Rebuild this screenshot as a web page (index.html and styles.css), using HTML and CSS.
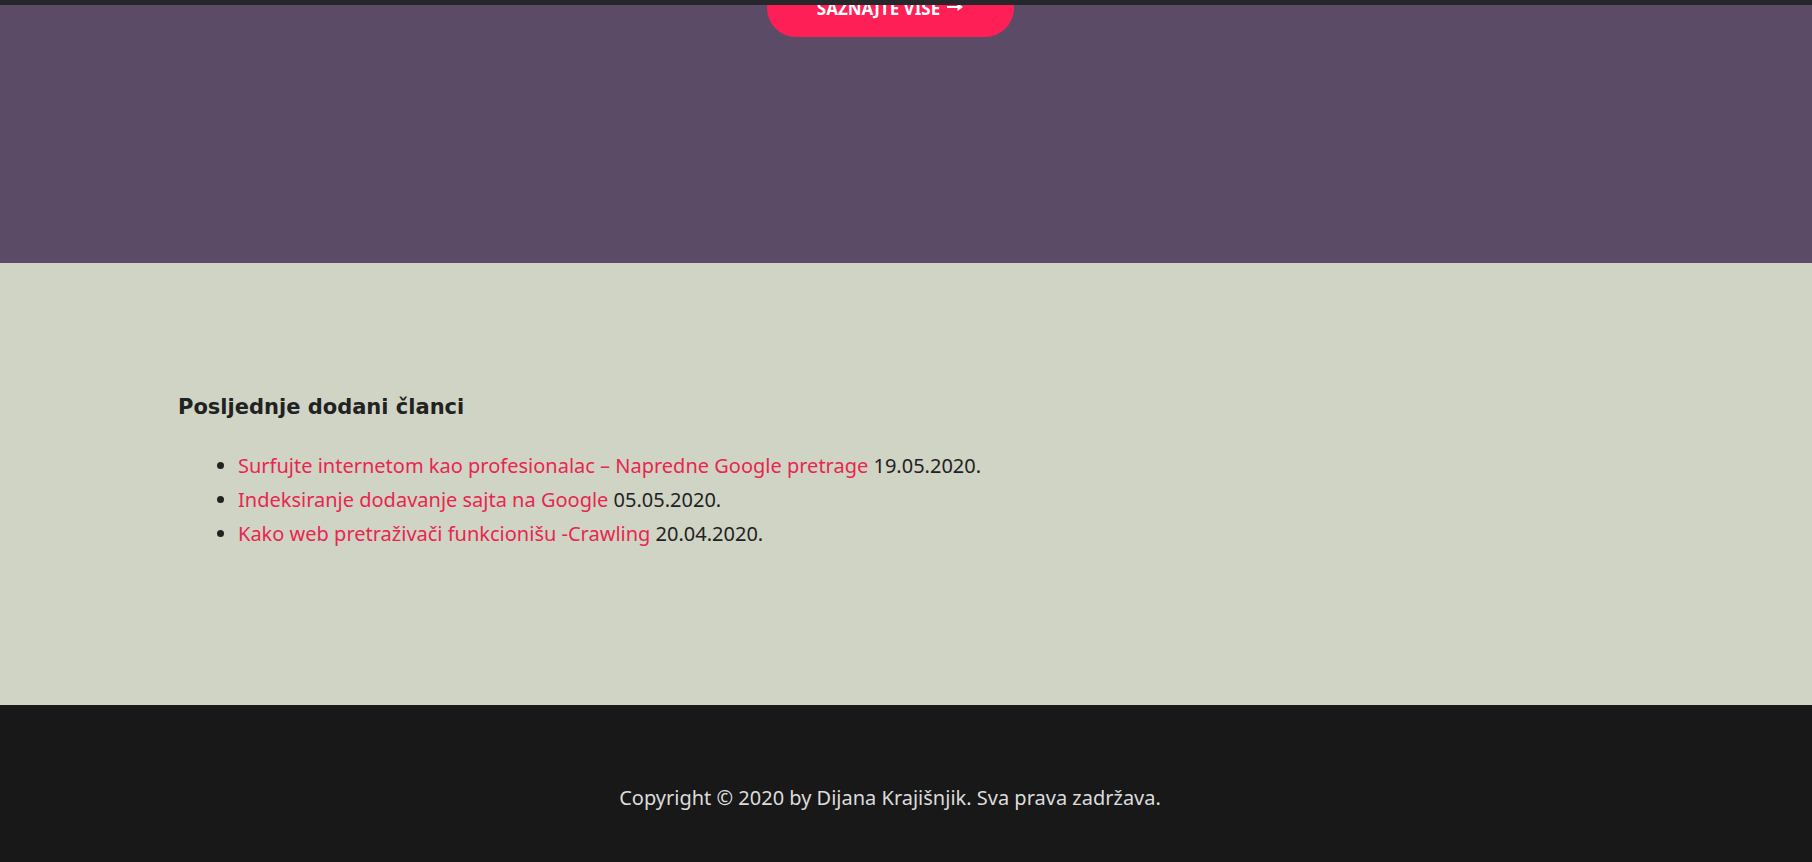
FILE: index.html
```html
<!DOCTYPE html>
<html lang="hr">
<head>
<meta charset="utf-8">
<title>Posljednje dodani članci</title>
<link rel="stylesheet" href="styles.css">
</head>
<body>
<div class="topbar"></div>
<section class="hero">
  <div class="hero-inner">
    <a class="btn" href="#">SAZNAJTE VIŠE <svg class="arrow" width="16" height="10" viewBox="0 0 16 10" aria-hidden="true"><path d="M0 4h10.5V1L16 5l-5.5 4V6H0z" fill="#fff"/></svg></a>
  </div>
</section>
<section class="recent">
  <div class="recent-inner">
    <h3 class="recent-title">Posljednje dodani članci</h3>
    <ul class="recent-list">
      <li><a href="#">Surfujte internetom kao profesionalac – Napredne Google pretrage</a> 19.05.2020.</li>
      <li><a href="#">Indeksiranje dodavanje sajta na Google</a> 05.05.2020.</li>
      <li><a href="#">Kako web pretraživači funkcionišu -Crawling</a> 20.04.2020.</li>
    </ul>
  </div>
</section>
<footer class="footer">
  <p class="copy">Copyright © 2020 by Dijana Krajišnjik. Sva prava zadržava.</p>
</footer>
</body>
</html>
```

FILE: styles.css
```css
html, body {
  margin: 0;
  padding: 0;
}
body {
  font-family: "Noto Sans", "Open Sans", sans-serif;
  color: #222;
  overflow: hidden;
}
.topbar {
  position: fixed;
  top: 0;
  left: 0;
  right: 0;
  height: 5px;
  background: #25272b;
  z-index: 10;
}
.hero {
  height: 263px;
  background: #5c4b66;
}
.hero-inner {
  display: flex;
  justify-content: center;
  padding-right: 32px;
}
.btn {
  display: flex;
  align-items: center;
  justify-content: center;
  box-sizing: border-box;
  width: 247px;
  height: 58px;
  margin-top: -21px;
  border-radius: 29px;
  background: #ff1f57;
  color: #fff;
  font-family: "Noto Sans", sans-serif;
  font-weight: 700;
  font-size: 17px;
  text-decoration: none;
  gap: 7px;
}
.arrow {
  display: block;
  margin-top: -2px;
}
.recent {
  height: 442px;
  box-sizing: border-box;
  background: #d0d4c4;
  padding: 130px 0 0 178px;
}
.recent-title {
  margin: 0;
  font-family: "DejaVu Sans", sans-serif;
  font-weight: 700;
  font-size: 21px;
  line-height: 28px;
  color: #222;
}
.recent-list {
  margin: 28px 0 0;
  padding-left: 60px;
  font-size: 20px;
  line-height: 34px;
}
.recent-list a {
  color: #e8264f;
  text-decoration: none;
}
.footer {
  height: 157px;
  box-sizing: border-box;
  background: #181818;
  display: flex;
  justify-content: center;
  padding: 78px 32px 0 0;
}
.copy {
  margin: 0;
  color: #dcdcdc;
  font-size: 20px;
  line-height: 30px;
}
```
